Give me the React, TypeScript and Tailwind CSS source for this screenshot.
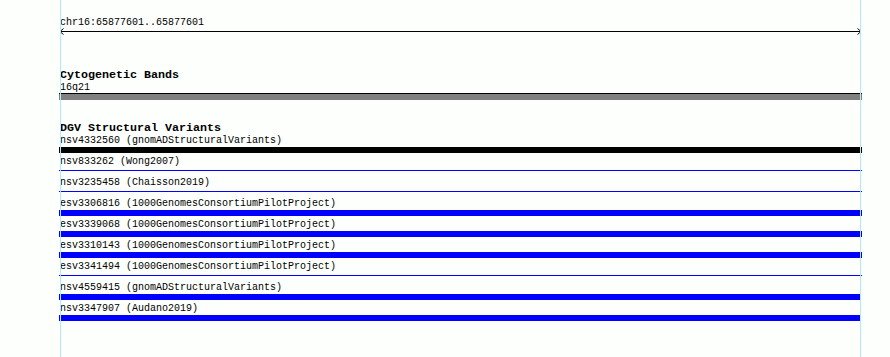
const variants = [
  { label: "nsv4332560 (gnomADStructuralVariants)", kind: "black" },
  { label: "nsv833262 (Wong2007)", kind: "thin" },
  { label: "nsv3235458 (Chaisson2019)", kind: "thin" },
  { label: "esv3306816 (1000GenomesConsortiumPilotProject)", kind: "thick" },
  { label: "esv3339068 (1000GenomesConsortiumPilotProject)", kind: "thick" },
  { label: "esv3310143 (1000GenomesConsortiumPilotProject)", kind: "thick" },
  { label: "esv3341494 (1000GenomesConsortiumPilotProject)", kind: "thin" },
  { label: "nsv4559415 (gnomADStructuralVariants)", kind: "thick", short: true },
  { label: "nsv3347907 (Audano2019)", kind: "thick", short: true },
];

export default function App() {
  return (
    <div className="relative w-[890px] h-[357px] overflow-hidden bg-[#fdfffd] text-black font-['Liberation_Mono',monospace]">
      <div className="ml-[59px] w-[803px] pt-[16px]">
        {/* Location ruler */}
        <div className="h-[12px] pt-px pl-px text-[10px] leading-[11px]">chr16:65877601..65877601</div>
        <svg width="803" height="8" className="block" shapeRendering="crispEdges">
          <line x1="1" y1="3.5" x2="802" y2="3.5" stroke="#000" strokeWidth="1" />
          <polyline points="4.5,0.5 1,3.5 4.5,6.5" fill="none" stroke="#000" strokeWidth="1" shapeRendering="auto" />
          <polyline points="798.5,0.5 802,3.5 798.5,6.5" fill="none" stroke="#000" strokeWidth="1" shapeRendering="auto" />
        </svg>

        {/* Cytogenetic Bands */}
        <div className="mt-[32px] h-[13px] pt-[2px] pl-px text-[11.67px] font-bold leading-[11px]">Cytogenetic Bands</div>
        <div className="h-[12px] pt-px pl-px text-[10px] leading-[11px]">16q21</div>
        <div className="h-[7px] border-t border-black bg-[#808080]" />

        {/* DGV Structural Variants */}
        <div className="mt-[21px] h-[13px] pt-[2px] pl-px text-[11.67px] font-bold leading-[11px]">DGV Structural Variants</div>
        {variants.map((v) => (
          <div key={v.label} className="h-[21px]">
            <div className="h-[12px] pt-px pl-px text-[10px] leading-[11px] whitespace-pre">{v.label}</div>
            {v.kind === "black" && <div className="mt-px h-[6px] bg-black" />}
            {v.kind === "thick" && (
              <div className={v.short ? "mt-px h-[6px] w-[802px] bg-[#0000ff]" : "mt-px h-[6px] bg-[#0000ff]"} />
            )}
            {v.kind === "thin" && (
              <div className="mt-px h-[6px] pt-[2px]">
                <div className="h-px bg-[#0000ff]" />
              </div>
            )}
          </div>
        ))}
      </div>

      {/* view guide lines */}
      <div className="absolute top-0 bottom-0 left-[60px] w-px bg-[#aeeeee]" />
      <div className="absolute top-0 bottom-0 left-[860px] w-px bg-[#aeeeee]" />
    </div>
  );
}
